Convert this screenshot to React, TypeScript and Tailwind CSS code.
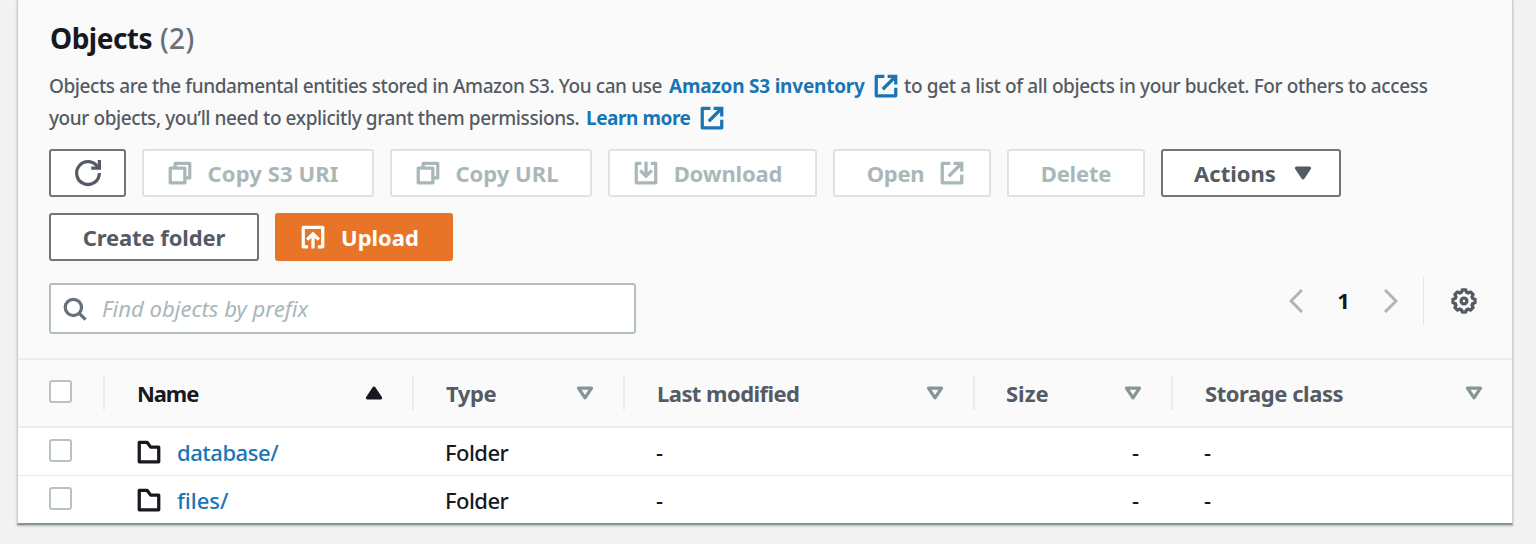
import type { ReactNode } from "react";

function Icon({ children, className = "" }: { children: ReactNode; className?: string }) {
  return (
    <svg
      viewBox="0 0 16 16"
      fill="none"
      stroke="currentColor"
      strokeWidth="2"
      strokeLinejoin="round"
      className={`size-[26px] shrink-0 ${className}`}
    >
      {children}
    </svg>
  );
}

function ExternalIcon({ className = "" }: { className?: string }) {
  return (
    <Icon className={className}>
      <path strokeLinejoin="miter" d="M9 2h5v5M6 10l8-8" />
      <path d="M14 9v5H2V2h5" />
    </Icon>
  );
}

const CopyIcon = () => (
  <Icon>
    <path d="M2 5h9v9H2z" />
    <path d="M5 5V2h9v9h-3" />
  </Icon>
);

const DownloadIcon = () => (
  <Icon>
    <path d="M5 2H2v12h12V2h-3" />
    <path strokeLinejoin="miter" d="M8 1v9M4.4 6.4 8 10l3.6-3.6" />
  </Icon>
);

const UploadIcon = () => (
  <Icon>
    <path d="M5 14H2V2h12v12h-3" />
    <path strokeLinejoin="miter" d="M8 15V6M4.4 9.6 8 6l3.6 3.6" />
  </Icon>
);

const RefreshIcon = () => (
  <Icon className="overflow-visible">
    <path strokeLinejoin="miter" d="M10 5h5V0" />
    <path d="M15 8a7 7 0 1 1-.9-3.4" />
  </Icon>
);

const FolderIcon = () => (
  <Icon className="text-[#16191f]">
    <path d="M2 2h4.8l2.2 3h5v9H2z" />
  </Icon>
);

const GearIcon = () => (
  <Icon className="text-[#545b64]">
    <circle cx="8" cy="8" r="1.8" strokeWidth="2" />
    <path
      strokeWidth="2"
      d="M6.9 1.2h2.2l.5 1.5.9.4 1.5-.7 1.6 1.6-.7 1.5.4.9 1.5.5v2.2l-1.5.5-.4.9.7 1.5-1.6 1.6-1.5-.7-.9.4-.5 1.5H6.9l-.5-1.5-.9-.4-1.5.7L2.4 12l.7-1.5-.4-.9-1.5-.5V6.9l1.5-.5.4-.9L2.4 4 4 2.4l1.5.7.9-.4z"
    />
  </Icon>
);

const CaretDown = () => (
  <Icon>
    <path fill="currentColor" d="M4 5h8l-4 6z" />
  </Icon>
);

const SortUp = () => (
  <Icon className="text-[#16191f]">
    <path fill="currentColor" d="M4 11h8L8 5z" />
  </Icon>
);

const SortDown = () => (
  <Icon className="text-[#879596]">
    <path d="M4 5h8l-4 6z" />
  </Icon>
);

const kinds = {
  normal: "border-2 border-[#70757d] bg-white text-[#545b64]",
  disabled: "border-2 border-[#dfe2e2] bg-white text-[#aab7b8]",
  primary: "bg-[#e87427] text-white",
};

function Button({
  kind = "normal",
  className,
  children,
}: {
  kind?: keyof typeof kinds;
  className: string;
  children: ReactNode;
}) {
  return (
    <button
      className={`flex h-12 items-center justify-center whitespace-nowrap rounded-[3px] text-[22px] font-bold ${kinds[kind]} ${className}`}
    >
      {children}
    </button>
  );
}

function Checkbox() {
  return <span className="block size-[23px] rounded-[3px] border-2 border-[#b8c3c3] bg-white" />;
}

const columns = "grid grid-cols-[87px_309px_211px_350px_198px_340px]";

function HeaderCell({
  label,
  className = "",
  sorted = false,
  last = false,
}: {
  label: string;
  className?: string;
  sorted?: boolean;
  last?: boolean;
}) {
  return (
    <div
      className={`flex h-[34px] items-center justify-between pl-8 ${last ? "pr-[26px]" : "border-r-2 border-[#eaeded] pr-[25px]"} ${sorted ? "text-[#16191f]" : "text-[#545b64]"}`}
    >
      <span className={`whitespace-nowrap text-[22px] font-bold leading-[34px] ${className}`}>{label}</span>
      {sorted ? <SortUp /> : <SortDown />}
    </div>
  );
}

function Row({ name, className }: { name: string; className: string }) {
  return (
    <div className={`${columns} h-[47px] items-center text-[22px] font-medium leading-[30px] text-[#16191f]`}>
      <div className="pb-[3px] pl-[31px]">
        <Checkbox />
      </div>
      <div className="flex items-center pl-[31px]">
        <FolderIcon />
        <a className={`ml-[15px] pt-px text-[#1a75b5] ${className}`}>{name}</a>
      </div>
      <div className="pl-[31px] pt-px tracking-[-0.55px]">Folder</div>
      <div className="pl-[31px] pt-px">-</div>
      <div className="pr-[34px] pt-px text-right">-</div>
      <div className="pl-[31px] pt-px">-</div>
    </div>
  );
}

const link = "font-bold text-[#1a75b5]";

export default function App() {
  return (
    <div className="h-[544px] overflow-hidden bg-[#f2f2f2] px-[17px] font-['Noto_Sans',sans-serif]">
      <section className="h-[525px] w-[1496px] border-x border-b-2 border-x-[#cbd0d0] border-b-[#879596] bg-white shadow-[0_1px_2px_rgba(0,28,36,0.3)]">
        <header className="h-[360px] border-b-2 border-[#eaeded] bg-[#fafafa] pl-[31px] pr-8 pt-[18px]">
          <h2 className="flex h-10 items-center gap-2 text-[28px] leading-10">
            <span className="pl-px font-bold tracking-[-0.5px] text-[#16191f]">Objects</span>
            <span className="font-medium tracking-[0.3px] text-[#687078]">(2)</span>
          </h2>
          <div className="mt-3 whitespace-nowrap text-[19px] font-medium leading-8 text-[#545b64]">
            <p className="flex h-8 items-center">
              <span className="w-[620px] tracking-[-0.41px]">
                Objects are the fundamental entities stored in Amazon S3. You can use
              </span>
              <a className={`w-[204px] tracking-[-0.22px] ${link}`}>Amazon S3 inventory</a>
              <ExternalIcon className="text-[#1a75b5]" />
              <span className="ml-[5px] tracking-[-0.37px]">
                to get a list of all objects in your bucket. For others to access
              </span>
            </p>
            <p className="flex h-8 items-center">
              <span className="w-[537px] tracking-[-0.41px]">
                your objects, you’ll need to explicitly grant them permissions.
              </span>
              <a className={`w-[113px] tracking-[-0.45px] ${link}`}>Learn more</a>
              <ExternalIcon className="text-[#1a75b5]" />
            </p>
          </div>

          <div className="mt-[15px] flex flex-wrap gap-4">
            <Button className="w-[77px]">
              <RefreshIcon />
            </Button>
            <Button kind="disabled" className="w-[232px] gap-[15px] pr-[11px] tracking-[0.1px]">
              <CopyIcon />
              Copy S3 URI
            </Button>
            <Button kind="disabled" className="w-[202px] gap-[15px] pr-[9px]">
              <CopyIcon />
              Copy URL
            </Button>
            <Button kind="disabled" className="w-[209px] gap-[15px] pr-[10px] tracking-[-0.15px]">
              <DownloadIcon />
              Download
            </Button>
            <Button kind="disabled" className="w-[158px] gap-[15px] pl-[8px] tracking-[-0.3px]">
              Open
              <ExternalIcon />
            </Button>
            <Button kind="disabled" className="w-[138px] tracking-[-0.2px]">
              Delete
            </Button>
            <Button className="w-[180px] gap-[14px] pl-[8px]">
              Actions
              <CaretDown />
            </Button>
          </div>
          <div className="mt-4 flex gap-4">
            <Button className="w-[210px] tracking-[-0.1px]">Create folder</Button>
            <Button kind="primary" className="w-[178px] gap-[15px] pr-[9px]">
              <UploadIcon />
              Upload
            </Button>
          </div>

          <div className="mt-[22px] flex items-start justify-between">
            <div className="flex h-[51px] w-[587px] items-center rounded-[3px] border-2 border-[#b3bfbf] bg-white pl-[11px]">
              <Icon className="text-[#687078]">
                <circle cx="7" cy="7" r="5" />
                <path d="m10.5 10.5 4 4" />
              </Icon>
              <span className="ml-[14px] text-[22.1px] italic text-[#aab7b8]">Find objects by prefix</span>
            </div>
            <div className="flex h-9 items-center">
              <svg viewBox="0 0 14 24" fill="none" stroke="#aab7b8" strokeWidth="3" className="h-6 w-[14px]">
                <path d="M13 1 2 12l11 11" />
              </svg>
              <span className="w-[81px] pb-0.5 text-center text-[22px] font-bold text-[#16191f]">1</span>
              <svg viewBox="0 0 14 24" fill="none" stroke="#aab7b8" strokeWidth="3" className="h-6 w-[14px]">
                <path d="m1 1 11 11L1 23" />
              </svg>
              <span className="ml-[25px] mr-[27px] h-12 w-px bg-[#e2e6e6]" />
              <span className="mr-[3px]">
                <GearIcon />
              </span>
            </div>
          </div>
        </header>

        <div className={`${columns} h-[68px] items-center border-b-2 border-[#eaeded] bg-[#fafafa]`}>
          <div className="flex h-[34px] items-center border-r-2 border-[#eaeded] pb-[3px] pl-[31px]">
            <Checkbox />
          </div>
          <HeaderCell label="Name" sorted className="tracking-[-1.1px]" />
          <HeaderCell label="Type" className="tracking-[-0.4px]" />
          <HeaderCell label="Last modified" className="tracking-[-0.55px]" />
          <HeaderCell label="Size" className="-ml-px" />
          <HeaderCell label="Storage class" className="tracking-[-0.45px]" last />
        </div>
        <Row name="database/" className="tracking-[-0.45px]" />
        <div className="border-t border-[#e4e8e8]">
          <Row name="files/" className="" />
        </div>
      </section>
    </div>
  );
}
